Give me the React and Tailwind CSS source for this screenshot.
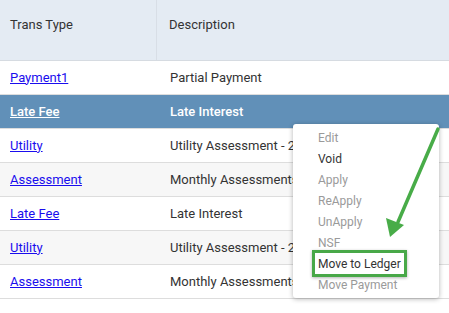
import React from 'react'

const rows = [
  { type: 'Payment1', desc: 'Partial Payment', bg: 'bg-white' },
  { type: 'Late Fee', desc: 'Late Interest', bg: 'bg-[#6190b8]', active: true },
  { type: 'Utility', desc: 'Utility Assessment - 2023', bg: 'bg-white' },
  { type: 'Assessment', desc: 'Monthly Assessments', bg: 'bg-[#f7f7f7]' },
  { type: 'Late Fee', desc: 'Late Interest', bg: 'bg-white' },
  { type: 'Utility', desc: 'Utility Assessment - 2023', bg: 'bg-[#f7f7f7]' },
  { type: 'Assessment', desc: 'Monthly Assessments', bg: 'bg-white' },
]

const menuItems = [
  { label: 'Edit', enabled: false },
  { label: 'Void', enabled: true },
  { label: 'Apply', enabled: false },
  { label: 'ReApply', enabled: false },
  { label: 'UnApply', enabled: false },
  { label: 'NSF', enabled: false },
  { label: 'Move to Ledger', enabled: true },
  { label: 'Move Payment', enabled: false },
]

export default function App() {
  return (
    <div className="relative w-[449px] h-[313px] overflow-hidden bg-white text-[13px] text-[#333]" style={{ fontFamily: 'Roboto, "Noto Sans", sans-serif' }}>
      {/* table header */}
      <div className="flex h-[61px] bg-[#e4ebf3] border-b border-[#d6dbe1] leading-[18px]">
        <div className="w-[157px] pt-[16px] pl-[10px] border-r border-[#d8dee6]">Trans Type</div>
        <div className="flex-1 pt-[16px] pl-[12px]">Description</div>
      </div>

      {rows.map((r, i) => (
        <div key={i} className={`flex h-[34px] border-b border-[#dddddd] ${r.bg}`}>
          <div className="w-[157px] flex items-center pl-[10px]">
            <a href="#" className={r.active ? 'text-white font-medium underline' : 'text-[#1a0dee] underline'}>{r.type}</a>
          </div>
          <div className={`flex-1 flex items-center pl-[13px] whitespace-nowrap ${r.active ? 'text-white font-medium' : ''}`}>{r.desc}</div>
        </div>
      ))}

      {/* context menu */}
      <div className="absolute left-[293px] top-[124px] w-[146px] py-[3px] bg-white rounded-[3px] shadow-[0_1px_5px_rgba(0,0,0,0.3)]">
        {menuItems.map((m) => (
          <div key={m.label} className={`h-[21px] flex items-center pl-[25px] text-[12px] ${m.enabled ? 'text-[#333]' : 'text-[#9a9a9a]'}`}>
            {m.label}
          </div>
        ))}
      </div>

      {/* annotation box */}
      <div className="absolute left-[312px] top-[250px] w-[95px] h-[27px] border-[3px] border-[#48a848] shadow-[0_1px_3px_rgba(0,0,0,0.3)]" />

      {/* annotation arrow */}
      <svg className="absolute left-0 top-0" width="449" height="313" viewBox="0 0 449 313">
        <line x1="438" y1="129" x2="398" y2="222" stroke="#48ac48" strokeWidth="3.5" strokeLinecap="round" />
        <polygon points="390,237 386,218 404,225" fill="#48ac48" />
      </svg>
    </div>
  )
}
